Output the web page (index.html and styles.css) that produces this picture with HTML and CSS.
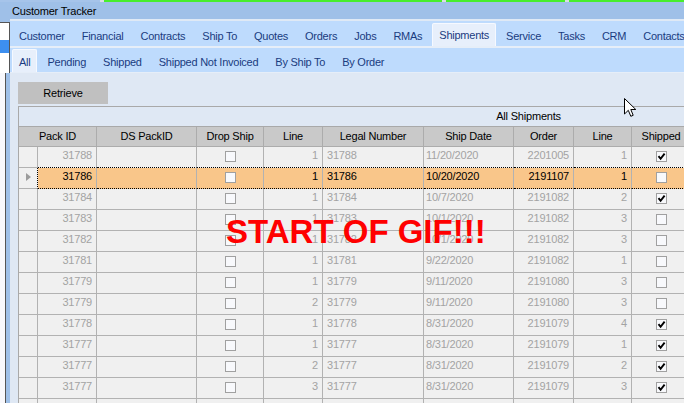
FILE: index.html
```html
<!DOCTYPE html>
<html lang="en">
<head>
    <meta charset="UTF-8">
    <title>Customer Tracker</title>
    <link rel="stylesheet" href="styles.css">
</head>
<body>

<div class="topbar">
    <span class="blank"></span><span class="gap"></span><span class="green g1"></span><span class="gap"></span><span class="green g2"></span><span class="gap"></span><span class="green g3"></span>
</div>

<div class="screen">
    <div class="side">
        <div class="side-list"><div class="side-sel"></div></div>
        <div class="side-lower"></div>
    </div>

    <div class="window">
        <div class="titlebar">Customer Tracker</div>

        <div class="tabs tabs-main">
            <span class="tab">Customer</span>
            <span class="tab">Financial</span>
            <span class="tab">Contracts</span>
            <span class="tab">Ship To</span>
            <span class="tab">Quotes</span>
            <span class="tab">Orders</span>
            <span class="tab">Jobs</span>
            <span class="tab">RMAs</span>
            <span class="tab active">Shipments</span>
            <span class="tab">Service</span>
            <span class="tab">Tasks</span>
            <span class="tab">CRM</span>
            <span class="tab">Contacts</span>
        </div>

        <div class="tabs tabs-sub">
            <span class="tab active">All</span>
            <span class="tab">Pending</span>
            <span class="tab">Shipped</span>
            <span class="tab">Shipped Not Invoiced</span>
            <span class="tab">By Ship To</span>
            <span class="tab">By Order</span>
        </div>

        <div class="content">
            <button class="retrieve">Retrieve</button>

            <table class="grid">
                <colgroup>
                    <col class="c-sel"><col class="c-pack"><col class="c-ds"><col class="c-drop"><col class="c-line">
                    <col class="c-legal"><col class="c-date"><col class="c-order"><col class="c-line2"><col class="c-shipped">
                </colgroup>
                <thead>
                    <tr class="group"><th colspan="10">All Shipments</th></tr>
                    <tr class="heads">
                        <th colspan="2">Pack ID</th>
                        <th>DS PackID</th>
                        <th>Drop Ship</th>
                        <th>Line</th>
                        <th>Legal Number</th>
                        <th>Ship Date</th>
                        <th>Order</th>
                        <th>Line</th>
                        <th>Shipped</th>
                    </tr>
                </thead>
                <tbody>
                    <tr class="above-selected">
                        <td class="sel"></td><td class="num">31788</td><td></td><td class="box"><span class="check"></span></td><td class="num">1</td>
                        <td class="txt">31788</td><td class="date">11/20/2020</td><td class="num">2201005</td><td class="num">1</td>
                        <td class="box"><span class="check on"><svg viewBox="0 0 9 9"><path d="M1.5 4.2 L3.6 6.8 L7.6 1.6"/></svg></span></td>
                    </tr>
                    <tr class="selected">
                        <td class="sel"><span class="arrow"></span></td><td class="num">31786</td><td></td><td class="box"><span class="check"></span></td><td class="num">1</td>
                        <td class="txt">31786</td><td class="date">10/20/2020</td><td class="num">2191107</td><td class="num">1</td>
                        <td class="box"><span class="check"></span></td>
                    </tr>
                    <tr>
                        <td class="sel"></td><td class="num">31784</td><td></td><td class="box"><span class="check"></span></td><td class="num">1</td>
                        <td class="txt">31784</td><td class="date">10/7/2020</td><td class="num">2191082</td><td class="num">2</td>
                        <td class="box"><span class="check on"><svg viewBox="0 0 9 9"><path d="M1.5 4.2 L3.6 6.8 L7.6 1.6"/></svg></span></td>
                    </tr>
                    <tr>
                        <td class="sel"></td><td class="num">31783</td><td></td><td class="box"><span class="check"></span></td><td class="num">1</td>
                        <td class="txt">31783</td><td class="date">10/1/2020</td><td class="num">2191082</td><td class="num">3</td>
                        <td class="box"><span class="check"></span></td>
                    </tr>
                    <tr>
                        <td class="sel"></td><td class="num">31782</td><td></td><td class="box"><span class="check"></span></td><td class="num">1</td>
                        <td class="txt">31782</td><td class="date">10/1/2020</td><td class="num">2191082</td><td class="num">3</td>
                        <td class="box"><span class="check"></span></td>
                    </tr>
                    <tr>
                        <td class="sel"></td><td class="num">31781</td><td></td><td class="box"><span class="check"></span></td><td class="num">1</td>
                        <td class="txt">31781</td><td class="date">9/22/2020</td><td class="num">2191082</td><td class="num">1</td>
                        <td class="box"><span class="check"></span></td>
                    </tr>
                    <tr>
                        <td class="sel"></td><td class="num">31779</td><td></td><td class="box"><span class="check"></span></td><td class="num">1</td>
                        <td class="txt">31779</td><td class="date">9/11/2020</td><td class="num">2191080</td><td class="num">3</td>
                        <td class="box"><span class="check"></span></td>
                    </tr>
                    <tr>
                        <td class="sel"></td><td class="num">31779</td><td></td><td class="box"><span class="check"></span></td><td class="num">2</td>
                        <td class="txt">31779</td><td class="date">9/11/2020</td><td class="num">2191080</td><td class="num">3</td>
                        <td class="box"><span class="check"></span></td>
                    </tr>
                    <tr>
                        <td class="sel"></td><td class="num">31778</td><td></td><td class="box"><span class="check"></span></td><td class="num">1</td>
                        <td class="txt">31778</td><td class="date">8/31/2020</td><td class="num">2191079</td><td class="num">4</td>
                        <td class="box"><span class="check on"><svg viewBox="0 0 9 9"><path d="M1.5 4.2 L3.6 6.8 L7.6 1.6"/></svg></span></td>
                    </tr>
                    <tr>
                        <td class="sel"></td><td class="num">31777</td><td></td><td class="box"><span class="check"></span></td><td class="num">1</td>
                        <td class="txt">31777</td><td class="date">8/31/2020</td><td class="num">2191079</td><td class="num">1</td>
                        <td class="box"><span class="check on"><svg viewBox="0 0 9 9"><path d="M1.5 4.2 L3.6 6.8 L7.6 1.6"/></svg></span></td>
                    </tr>
                    <tr>
                        <td class="sel"></td><td class="num">31777</td><td></td><td class="box"><span class="check"></span></td><td class="num">2</td>
                        <td class="txt">31777</td><td class="date">8/31/2020</td><td class="num">2191079</td><td class="num">2</td>
                        <td class="box"><span class="check on"><svg viewBox="0 0 9 9"><path d="M1.5 4.2 L3.6 6.8 L7.6 1.6"/></svg></span></td>
                    </tr>
                    <tr>
                        <td class="sel"></td><td class="num">31777</td><td></td><td class="box"><span class="check"></span></td><td class="num">3</td>
                        <td class="txt">31777</td><td class="date">8/31/2020</td><td class="num">2191079</td><td class="num">3</td>
                        <td class="box"><span class="check on"><svg viewBox="0 0 9 9"><path d="M1.5 4.2 L3.6 6.8 L7.6 1.6"/></svg></span></td>
                    </tr>
                    <tr>
                        <td class="sel"></td><td class="num">31776</td><td></td><td class="box"><span class="check"></span></td><td class="num">1</td>
                        <td class="txt">31776</td><td class="date">8/28/2020</td><td class="num">2191078</td><td class="num">1</td>
                        <td class="box"><span class="check"></span></td>
                    </tr>
                </tbody>
            </table>
        </div>
    </div>
</div>

<div class="banner">START OF GIF!!!</div>

<svg class="cursor" width="13" height="20" viewBox="0 0 13 20">
    <path d="M0.5 0.5 L0.5 16 L4.3 12.3 L6.8 18.3 L9.2 17.3 L6.8 11.5 L11.8 11.5 Z"/>
</svg>

</body>
</html>
```

FILE: styles.css
```css
* {
    box-sizing: border-box;
}

body {
    margin: 0;
    width: 684px;
    height: 403px;
    overflow: hidden;
    position: relative;
    background-color: #9fc0e8;
    font-family: "Liberation Sans", Arial, sans-serif;
    font-size: 11px;
    letter-spacing: -0.2px;
    color: #000;
}

/* strip of the window behind, along the top */
.topbar {
    display: flex;
    height: 2px;
}

.topbar .blank {
    width: 100px;
    background-color: #a6c4ea;
}

.topbar .gap {
    width: 4px;
    background-color: #d9dde3;
}

.topbar .green {
    background-color: #47ee2c;
}

.topbar .g1 { width: 338px; }
.topbar .g2 { width: 119px; }
.topbar .g3 { flex: 1; }

.screen {
    display: flex;
    height: 401px;
}

/* window edge on the left */
.side {
    width: 11px;
    display: flex;
    flex-direction: column;
    padding-top: 20px;
}

.side-list {
    width: 10px;
    height: 51px;
    background-color: #fff;
    border-top: 1px solid #555;
    border-right: 1px solid #555;
    padding-top: 17px;
}

.side-sel {
    height: 13px;
    background-color: #3d8ff0;
}

.side-lower {
    width: 6px;
    flex: 1;
    background-color: #f8f8fc;
    border-right: 1px solid #555;
}

.window {
    flex: 1;
    display: flex;
    flex-direction: column;
    background-color: #dfe8f4;
}

.titlebar {
    height: 19px;
    padding: 3px 0 0 2px;
    line-height: 13px;
    background-color: #9fc0e8;
    border-bottom: 2px solid #dfe9f5;
}

.tabs {
    display: flex;
    background-color: #bedbfd;
    color: #1a3b80;
    white-space: nowrap;
    letter-spacing: -0.25px;
}

.tabs-main {
    height: 27px;
    padding-left: 0.5px;
    border-bottom: 2px solid #e6eef8;
}

.tabs-sub {
    height: 25px;
    padding-left: 0.5px;
    border-bottom: 1px solid #e6eef8;
}

.tab {
    padding: 9px 8.5px 0;
    line-height: 13px;
}

.tabs-sub .tab {
    padding-top: 8px;
}

.tab.active {
    margin: 2px 1.5px 0;
    padding: 5px 6px 0;
    background-color: #e7effb;
    border: 1px solid #f6f9ff;
    border-bottom: none;
    border-radius: 2px 2px 0 0;
}

.tabs-sub .tab.active {
    margin-top: 1px;
    padding-top: 6px;
}

.content {
    flex: 1;
    padding: 9px 0 0 8px;
    overflow: hidden;
}

.retrieve {
    display: block;
    width: 90px;
    height: 22px;
    margin-bottom: 2px;
    padding: 0;
    border: none;
    background-color: #c0c0c0;
    font-family: inherit;
    font-size: 11px;
    letter-spacing: -0.2px;
    color: #000;
}

/* data grid */
.grid {
    table-layout: fixed;
    width: 673px;
    border-collapse: separate;
    border-spacing: 0;
    border-top: 1px solid #a9a9a9;
    border-left: 1px solid #a9a9a9;
}

.c-sel { width: 19px; }
.c-pack { width: 59px; }
.c-ds { width: 100px; }
.c-drop { width: 67px; }
.c-line { width: 59px; }
.c-legal { width: 101px; }
.c-date { width: 90px; }
.c-order { width: 60px; }
.c-line2 { width: 58px; }
.c-shipped { width: 59px; }

.grid th {
    height: 20px;
    padding: 0;
    font-weight: normal;
    line-height: 13px;
    white-space: nowrap;
    vertical-align: middle;
}

.group th {
    text-align: center;
    padding-left: 347px;
    background-color: #dfe8f4;
    border-bottom: 1px solid #a9a9a9;
}

.heads th {
    background-color: #c9c9c9;
    border-right: 1px solid #acacac;
    border-bottom: 1px solid #acacac;
}

.grid td {
    height: 21px;
    padding: 1px 4px 0;
    line-height: 14px;
    vertical-align: top;
    white-space: nowrap;
    background-color: #f0f0f0;
    color: #a3a3a3;
    border-right: 1px solid #b2b2b2;
    border-bottom: 1px solid #b2b2b2;
}

.grid td.num {
    text-align: right;
}

.grid td.date {
    padding-left: 2px;
}

.grid td.box {
    text-align: center;
    padding: 4px 0 0;
}

.check {
    display: inline-block;
    width: 11px;
    height: 11px;
    border: 1px solid #a0a0a0;
    background-color: #f8f9fc;
    vertical-align: top;
}

.check svg {
    display: block;
    width: 9px;
    height: 9px;
}

.check svg path {
    fill: none;
    stroke: #000;
    stroke-width: 1.9;
}

/* selected row with focus rectangle */
.above-selected td:not(.sel) {
    border-bottom: 1px dotted #000;
}

.selected td {
    background-color: #f9c68a;
    color: #000;
    border-bottom: 1px dotted #000;
}

.selected td.sel {
    background-color: #f0f0f0;
    border-bottom-color: #b2b2b2;
    border-bottom-style: solid;
    border-right: 1px dotted #000;
}

.arrow {
    display: block;
    width: 0;
    height: 0;
    margin: 4px 0 0 3px;
    border-left: 5px solid #9c9c9c;
    border-top: 4px solid transparent;
    border-bottom: 4px solid transparent;
}

.banner {
    position: absolute;
    left: 226px;
    top: 215px;
    font-size: 33px;
    line-height: 33px;
    font-weight: bold;
    letter-spacing: 0;
    color: #ff0000;
    white-space: nowrap;
}

.cursor {
    position: absolute;
    left: 624px;
    top: 98px;
}

.cursor path {
    fill: #fff;
    stroke: #000;
    stroke-width: 1;
}
```
